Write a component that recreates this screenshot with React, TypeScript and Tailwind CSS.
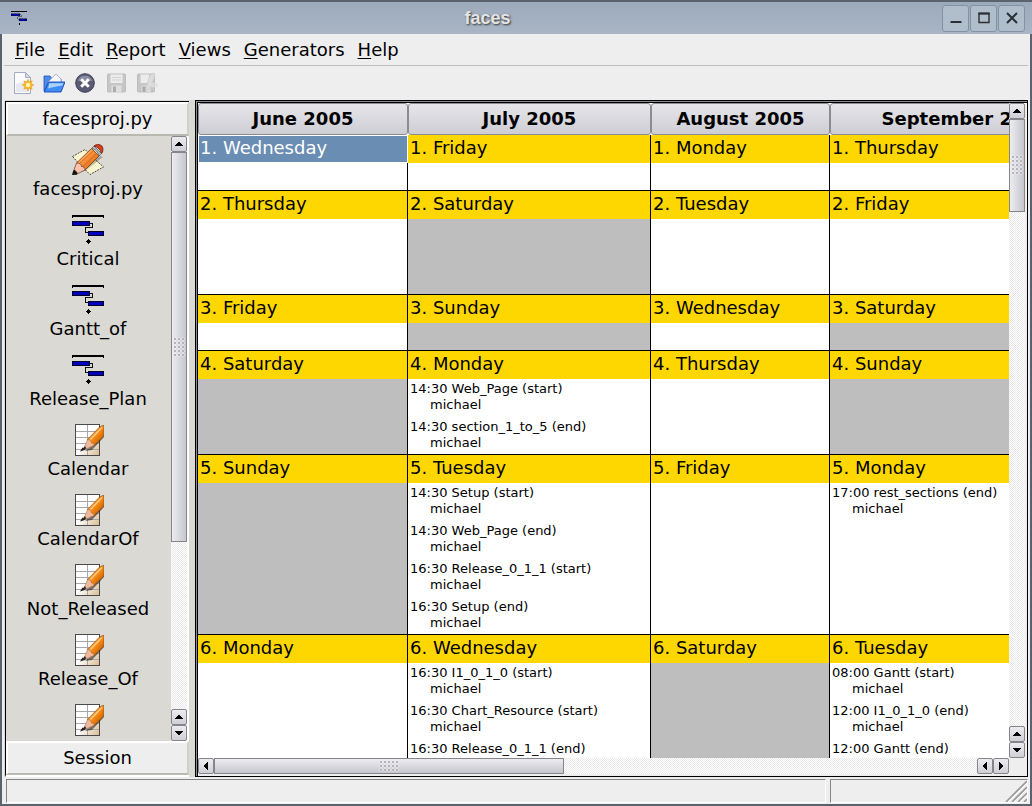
import React from "react";

type Entry = { time: string; title: string; who: string };
type Cell = { day: string; off?: boolean; selected?: boolean; entries?: Entry[] };

const e = (time: string, title: string): Entry => ({ time, title, who: "michael" });

const months = ["June 2005", "July 2005", "August 2005", "September 2005"];

const rows: { height: string; cells: Cell[] }[] = [
  {
    height: "h-14",
    cells: [{ day: "1. Wednesday", selected: true }, { day: "1. Friday" }, { day: "1. Monday" }, { day: "1. Thursday" }],
  },
  {
    height: "h-26",
    cells: [{ day: "2. Thursday" }, { day: "2. Saturday", off: true }, { day: "2. Tuesday" }, { day: "2. Friday" }],
  },
  {
    height: "h-14",
    cells: [{ day: "3. Friday" }, { day: "3. Sunday", off: true }, { day: "3. Wednesday" }, { day: "3. Saturday", off: true }],
  },
  {
    height: "h-26",
    cells: [
      { day: "4. Saturday", off: true },
      { day: "4. Monday", entries: [e("14:30", "Web_Page (start)"), e("14:30", "section_1_to_5 (end)")] },
      { day: "4. Thursday" },
      { day: "4. Sunday", off: true },
    ],
  },
  {
    height: "h-45",
    cells: [
      { day: "5. Sunday", off: true },
      {
        day: "5. Tuesday",
        entries: [
          e("14:30", "Setup (start)"),
          e("14:30", "Web_Page (end)"),
          e("16:30", "Release_0_1_1 (start)"),
          e("16:30", "Setup (end)"),
        ],
      },
      { day: "5. Friday" },
      { day: "5. Monday", entries: [e("17:00", "rest_sections (end)")] },
    ],
  },
  {
    height: "h-45",
    cells: [
      { day: "6. Monday" },
      {
        day: "6. Wednesday",
        entries: [e("16:30", "I1_0_1_0 (start)"), e("16:30", "Chart_Resource (start)"), e("16:30", "Release_0_1_1 (end)")],
      },
      { day: "6. Saturday", off: true },
      {
        day: "6. Tuesday",
        entries: [e("08:00", "Gantt (start)"), e("12:00", "I1_0_1_0 (end)"), e("12:00", "Gantt (end)")],
      },
    ],
  },
];

function GanttIcon({ className }: { className?: string }) {
  return (
    <svg viewBox="0 0 32 32" className={className} aria-hidden="true" shapeRendering="crispEdges">
      <path d="M0 1h32v3h-1v-1H1v1H0z" fill="#000" />
      <path d="M18 9.5h2.500v4h-7v5h2" fill="none" stroke="#111" />
      <rect x="0.500" y="7.500" width="17" height="4" fill="#0000c0" stroke="#000020" />
      <rect x="16.500" y="17.500" width="15" height="4" fill="#0000c0" stroke="#000020" />
      <path d="M16 25h1v1h1v1h1v1h-1v1h-1v1h-1v-1h-1v-1h-1v-1h1v-1h1z" fill="#000" />
    </svg>
  );
}

function CalendarIcon() {
  return (
    <svg viewBox="0 0 32 32" className="size-8 shrink-0" aria-hidden="true">
      <defs>
        <linearGradient id="sheet" x1="0" y1="0" x2="1" y2="1">
          <stop offset="0.5" stopColor="#fff" />
          <stop offset="1" stopColor="#d9b98c" />
        </linearGradient>
        <linearGradient id="wood" x1="0" y1="0" x2="1" y2="1">
          <stop offset="0.2" stopColor="#ffb04a" />
          <stop offset="0.550" stopColor="#f58410" />
          <stop offset="1" stopColor="#a04c00" />
        </linearGradient>
      </defs>
      <rect x="3.500" y="0.500" width="24" height="31" fill="url(#sheet)" stroke="#4a4a4a" />
      <path d="M4 7.500h23M4 13.500h23M4 19.500h23M4 25.500h23M15.500 1v30" stroke="#a8a8a8" fill="none" />
      <path d="M13 27l7-1 12-13v-3l-14 13z" fill="#000" opacity="0.5" />
      <path d="M27 3.500L30.500 1.500H32V12L22 21.500 15.500 15.500z" fill="url(#wood)" stroke="#8a4500" strokeWidth="0.600" />
      <path d="M30 3.500L18.500 15.500" stroke="#ffcf8e" strokeWidth="1.200" />
      <path d="M15.500 15.500l-4 10.500 10.500-4.500c0-2-1.500-2.500-2.500-2.500 0-2-1.500-3.300-4-3.500z" fill="#f1b99a" stroke="#9c6044" strokeWidth="0.500" />
      <path d="M10.500 23.500L8 27.500l5.500-1.800z" fill="#1a1a1a" />
      <path d="M12.800 22L10 26l4.500-1.500z" fill="#3a2a20" />
    </svg>
  );
}

function PencilIcon() {
  return (
    <svg viewBox="0 0 32 32" className="size-8 shrink-0" aria-hidden="true">
      <defs>
        <linearGradient id="body" x1="0" y1="0" x2="1" y2="1">
          <stop offset="0.2" stopColor="#ffc08a" />
          <stop offset="0.5" stopColor="#f58a30" />
          <stop offset="1" stopColor="#c05a10" />
        </linearGradient>
      </defs>
      <path d="M0.500 12.500L13 5.500l10 10 8.500 7.500-13.500 7.500-9-9z" fill="#fbf5cf" stroke="#222" strokeWidth="0.800" strokeDasharray="2 1" />
      <path d="M8 28L28 12l3 1-18 14z" fill="#000" opacity="0.250" />
      <path d="M4.500 19L19.500 4.500l7.500 7.500L13 26z" fill="url(#body)" stroke="#7d3a08" strokeWidth="0.800" />
      <path d="M7.500 19.500L21 7M10.500 23L24.500 9.500" stroke="#c96820" strokeWidth="0.900" />
      <path d="M19.500 4.500L22 2l7.500 7.500-2.500 2.500c-1-4-3.500-7-7.500-7.500z" fill="#b8bcc2" stroke="#555" strokeWidth="0.700" />
      <path d="M22 2c3-2.500 7.500-1.500 8.500 1 .8 2.500.5 5-1 6.500C28.500 5.500 26 3 22 2z" fill="#d9401c" stroke="#6c1a08" strokeWidth="0.800" />
      <path d="M4.500 19L1 28.500 4 30.500 13 26c0-2.500-1.500-3.500-3.500-3.500C9.500 20 7.500 19 4.500 19z" fill="#f7c3ad" stroke="#6e3a26" strokeWidth="0.700" />
      <path d="M2 26.500L0.500 30.500 5 30c0-2-1-3-3-3.500z" fill="#111" stroke="#111" />
    </svg>
  );
}

const sidebar: { label?: string; kind: "pencil" | "gantt" | "calendar" }[] = [
  { label: "facesproj.py", kind: "pencil" },
  { label: "Critical", kind: "gantt" },
  { label: "Gantt_of", kind: "gantt" },
  { label: "Release_Plan", kind: "gantt" },
  { label: "Calendar", kind: "calendar" },
  { label: "CalendarOf", kind: "calendar" },
  { label: "Not_Released", kind: "calendar" },
  { label: "Release_Of", kind: "calendar" },
  { kind: "calendar" },
];

const arrows = {
  up: "M4 10h8v-1h-1v-1h-1v-1h-1v-1H7v1H6v1H5v1H4z",
  down: "M4 6h8v1h-1v1h-1v1h-1v1H7V9H6V8H5V7H4z",
  left: "M10 4v8H9v-1H8v-1H7V9H6V7h1V6h1V5h1V4z",
  right: "M6 4v8h1v-1h1v-1h1V9h1V7H9V6H8V5H7V4z",
};

function ScrollButton({ dir }: { dir: keyof typeof arrows }) {
  return (
    <button
      type="button"
      aria-label={`Scroll ${dir}`}
      className="size-4 shrink-0 rounded-[2px] border border-[#85858a] bg-linear-to-b from-[#ececf0] to-[#cfcfd6]"
    >
      <svg viewBox="1 1 14 14" className="block size-full" shapeRendering="crispEdges" aria-hidden="true">
        <path d={arrows[dir]} fill="#000" />
      </svg>
    </button>
  );
}

const dither = "bg-[repeating-conic-gradient(#ffffff_0_25%,#e9e9e9_0_50%)] bg-[length:2px_2px]";
const grip = "bg-[radial-gradient(#b4b4ba_1px,#f4f4f6_1px,transparent_2px)] bg-[length:4px_4px]";

function VScroll({ thumb, rest }: { thumb: string; rest: string }) {
  return (
    <div className={`flex w-4 shrink-0 flex-col ${dither}`}>
      <ScrollButton dir="up" />
      <div
        className={`flex basis-0 items-center justify-center border border-[#85858a] bg-linear-to-r from-[#ececf0] to-[#c6c6ce] ${thumb}`}
      >
        <span className={`h-5 w-3 ${grip}`} />
      </div>
      <div className={`basis-0 ${rest}`} />
      <ScrollButton dir="up" />
      <ScrollButton dir="down" />
    </div>
  );
}

function HScroll() {
  return (
    <div className={`flex h-4 min-w-0 flex-1 ${dither}`}>
      <ScrollButton dir="left" />
      <div className="flex grow-349 basis-0 items-center justify-center border border-[#85858a] bg-linear-to-b from-[#ececf0] to-[#c6c6ce]">
        <span className={`h-3 w-5 ${grip}`} />
      </div>
      <div className="grow-414 basis-0" />
      <ScrollButton dir="left" />
      <ScrollButton dir="right" />
    </div>
  );
}

function DayCell({ cell }: { cell: Cell }) {
  return (
    <td className={`border-r border-b border-black p-0 align-top ${cell.off ? "bg-[#bebebe]" : "bg-white"}`}>
      <div
        className={
          cell.selected
            ? "-mr-px h-7 border border-white bg-[#698db3] pl-px text-lg leading-6 text-white"
            : "h-7 bg-[#ffd700] pl-0.5 text-lg leading-[26px]"
        }
      >
        {cell.day}
      </div>
      {cell.entries?.map((x) => (
        <div key={x.time + x.title} className="h-[38px] pt-0.5 pl-0.5 text-[13px] leading-4 last:h-9">
          <div>
            {x.time} {x.title}
          </div>
          <div className="pl-5">{x.who}</div>
        </div>
      ))}
    </td>
  );
}

function Calendar() {
  return (
    <table className="w-[903px] table-fixed border-separate border-spacing-0 whitespace-nowrap">
      <colgroup>
        <col className="w-[210px]" />
        <col className="w-[243px]" />
        <col className="w-[179px]" />
        <col className="w-[271px]" />
      </colgroup>
      <thead>
        <tr className="h-8">
          {months.map((m) => (
            <th
              key={m}
              className="rounded-[3px] border border-[#8b8b90] bg-linear-to-b from-[#e6e6ea] to-[#cdcdd4] p-0 text-lg leading-6 font-bold"
            >
              {m}
            </th>
          ))}
        </tr>
      </thead>
      <tbody>
        {rows.map((r, i) => (
          <tr key={i} className={r.height}>
            {r.cells.map((c) => (
              <DayCell key={c.day} cell={c} />
            ))}
          </tr>
        ))}
      </tbody>
    </table>
  );
}

function TitleBar() {
  const control = "flex size-[27px] items-center justify-center rounded-[3px] border border-[#8292a5] bg-[#b0bdca]";
  return (
    <header className="flex h-[34px] shrink-0 items-center border-t-2 border-[#5a626e] bg-linear-to-b from-[#9caabc] to-[#a9b5c4] pr-[7px] pl-[11px]">
      <GanttIcon className="size-4" />
      <h1 className="flex-1 pl-1.5 text-center font-['Liberation_Sans',Arial,sans-serif] text-lg leading-6 font-bold text-[#e4e4e4] [text-shadow:1px_1px_2px_#333]">
        faces
      </h1>
      <div className="flex gap-px">
        <button type="button" aria-label="Minimize" className={control}>
          <svg viewBox="0 0 16 16" className="size-4" aria-hidden="true">
            <path d="M2.500 12h11" stroke="#2b2f33" strokeWidth="2" />
          </svg>
        </button>
        <button type="button" aria-label="Maximize" className={control}>
          <svg viewBox="0 0 16 16" className="size-4" aria-hidden="true">
            <path d="M3 3.500h10v9H3z" fill="none" stroke="#2b2f33" strokeWidth="1.400" />
            <path d="M2.300 3.500h11.400" stroke="#2b2f33" strokeWidth="2" />
          </svg>
        </button>
        <button type="button" aria-label="Close" className={control}>
          <svg viewBox="0 0 16 16" className="size-4" aria-hidden="true">
            <path d="M3 3l10 10M13 3L3 13" stroke="#2b2f33" strokeWidth="2" />
          </svg>
        </button>
      </div>
    </header>
  );
}

function Toolbar() {
  return (
    <div className="flex h-[34px] shrink-0 items-center gap-[9px] pl-2" role="toolbar" aria-label="Main">
      <button type="button" aria-label="New">
        <svg viewBox="0 0 22 22" className="size-[22px]" aria-hidden="true">
          <path d="M2.500 0.500h11l5 5v16h-16z" fill="#fbfbfe" stroke="#a6a9c4" />
          <path d="M4 20V12l13-4v12z" fill="#e8e8f2" />
          <path d="M13.500 0.500v5h5z" fill="#d8daea" stroke="#a6a9c4" />
          <path d="M16 7l1.300 2.800 2.900-1-1 2.900L22 13l-2.800 1.300 1 2.900-2.900-1L16 19l-1.300-2.800-2.900 1 1-2.900L10 13l2.800-1.300-1-2.900 2.900 1z" fill="#f8b62c" stroke="#e39a18" strokeWidth="0.500" />
          <circle cx="16" cy="13" r="2.200" fill="#fff4b0" />
        </svg>
      </button>
      <button type="button" aria-label="Open">
        <svg viewBox="0 0 22 22" className="size-[22px]" aria-hidden="true">
          <path d="M1 4h6l2 3h9v12H1z" fill="#4b8be8" stroke="#1a4fb8" strokeWidth="0.800" />
          <path d="M5 10l8-8 5 5v5H5z" fill="#f4f4fa" stroke="#9aa0b8" strokeWidth="0.700" />
          <path d="M5.500 10H22l-4 10H1.200z" fill="#3f8cf4" stroke="#1646b4" strokeWidth="0.900" />
          <path d="M6.300 11.200h14l-1 2.200c-5 1-9 1-14.200 3.200z" fill="#a9d2ff" />
        </svg>
      </button>
      <button type="button" aria-label="Close project">
        <svg viewBox="0 0 22 22" className="size-[22px]" aria-hidden="true">
          <circle cx="11" cy="11" r="9.300" fill="#595b74" stroke="#3b3c55" strokeWidth="1" />
          <path d="M3.500 9.500a7.800 7.800 0 0 1 15 0c-4-2-11-2-15 0z" fill="#8b8da3" />
          <path d="M7.200 7.200l7.600 7.600M14.800 7.200l-7.600 7.600" stroke="#fff" strokeWidth="3" />
        </svg>
      </button>
      <button type="button" aria-label="Save" disabled>
        <svg viewBox="0 0 22 22" className="size-[22px]" aria-hidden="true">
          <path d="M2.500 3q0-1 1-1h16q1 0 1 1v16q0 1-1 1h-16q-1 0-1-1z" fill="#c6c6c6" stroke="#b2b2b2" strokeWidth="0.700" />
          <path d="M5.500 2.500h12V11h-12z" fill="#ececec" />
          <path d="M7 5.500h9M7 8h9" stroke="#d2d2d2" />
          <path d="M6.500 13.500h10V20h-10z" fill="#dedede" />
          <path d="M8 14.500h3V20H8z" fill="#ababab" />
        </svg>
      </button>
      <button type="button" aria-label="Save as" disabled>
        <svg viewBox="0 0 22 22" className="size-[22px]" aria-hidden="true">
          <path d="M1.500 3q0-1 1-1h15q1 0 1 1v16q0 1-1 1h-15q-1 0-1-1z" fill="#c6c6c6" stroke="#b2b2b2" strokeWidth="0.700" />
          <path d="M4.500 2.500h9V11h-9z" fill="#ececec" />
          <path d="M5.500 13.500h9V20h-9z" fill="#dedede" />
          <path d="M6.500 14.500h3V20h-3z" fill="#ababab" />
          <path d="M10 16l4-13 4-2 1 3-5 12-4 4z" fill="#dcdcdc" stroke="#c4c4c4" strokeWidth="0.600" />
          <ellipse cx="18" cy="13" rx="4" ry="2.500" fill="#dedede" opacity="0.8" />
        </svg>
      </button>
    </div>
  );
}

export default function App() {
  const bevel = "border-2 border-t-white border-l-white border-r-[#cfcfcd] border-b-[#b9b9b4] bg-[#eeeeee]";
  return (
    <div className="flex h-screen flex-col overflow-hidden bg-[#eeeeee] font-['DejaVu_Sans',Verdana,sans-serif] text-black">
      <TitleBar />
      <div className="flex min-h-0 flex-1 flex-col border-x-2 border-b-2 border-[#5a626e] px-0.5">
        <nav className="flex h-8 shrink-0 items-center gap-[13px] border-b border-[#bdbdbd] pl-[11px] text-lg leading-6">
          {["File", "Edit", "Report", "Views", "Generators", "Help"].map((m) => (
            <button type="button" key={m}>
              <span className="underline decoration-1 underline-offset-2">{m[0]}</span>
              {m.slice(1)}
            </button>
          ))}
        </nav>
        <Toolbar />
        <main className="flex min-h-0 flex-1 bg-[#dad9d4] pl-px">
          <aside className="mt-px flex w-[184px] shrink-0 flex-col border-t border-b-2 border-l border-t-black border-b-white border-l-black bg-[#eeeeee]">
            <button type="button" className={`h-[34px] shrink-0 text-lg leading-6 ${bevel}`}>
              facesproj.py
            </button>
            <div className="flex min-h-0 flex-1 border-r-2 border-white bg-[#dad9d4]">
              <ul className="min-w-0 flex-1 overflow-hidden pt-2 pr-px">
                {sidebar.map((s, i) => (
                  <li key={i} className="flex h-[70px] flex-col items-center gap-px text-lg leading-6">
                    {s.kind === "pencil" ? <PencilIcon /> : s.kind === "gantt" ? <GanttIcon className="size-8 shrink-0" /> : <CalendarIcon />}
                    {s.label && <span>{s.label}</span>}
                  </li>
                ))}
              </ul>
              <VScroll thumb="grow-389" rest="grow-168" />
            </div>
            <button type="button" className={`h-[34px] shrink-0 text-lg leading-6 ${bevel}`}>
              Session
            </button>
          </aside>
          <div className="w-1.5 shrink-0" />
          <section className="flex min-w-0 flex-1 border border-black bg-[#8b8b90] pt-px pl-px">
            <div className="flex min-w-0 flex-1 flex-col border-t border-l border-black bg-[#eeeeee] pr-0.5 pb-0.5">
              <div className="flex min-h-0 flex-1">
                <div className="min-w-0 flex-1 overflow-hidden bg-white">
                  <Calendar />
                </div>
                <VScroll thumb="grow-91" rest="grow-516" />
              </div>
              <div className="flex shrink-0">
                <HScroll />
                <div className="size-4 shrink-0" />
              </div>
            </div>
          </section>
        </main>
        <footer className="flex h-[27px] shrink-0 gap-1 pt-0.5 pb-px pl-0.5">
          <div className="flex-1 border border-t-[#858585] border-r-white border-b-white border-l-[#858585]" />
          <div className="flex w-[198px] items-end justify-end border border-t-[#858585] border-r-white border-b-white border-l-[#858585]">
            <svg viewBox="0 0 22 22" className="size-[22px]" aria-hidden="true">
              <path d="M1 22L22 1M7 22L22 7M13 22l9-9M19 22l3-3" stroke="#999" strokeWidth="1.600" />
              <path d="M3 22L22 3M9 22L22 9M15 22l7-7" stroke="#fff" />
            </svg>
          </div>
        </footer>
      </div>
    </div>
  );
}
